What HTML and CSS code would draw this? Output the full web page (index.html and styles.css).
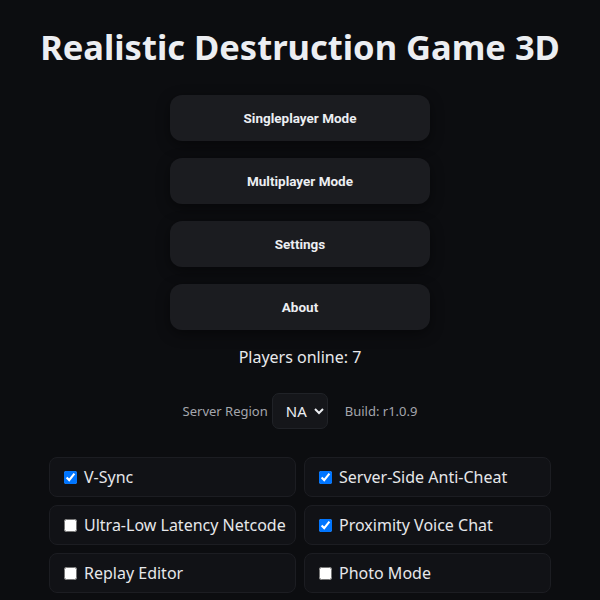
FILE: index.html
```html
<!DOCTYPE html>
<html lang="en">
<head>
    <meta charset="UTF-8">
    <meta name="viewport" content="width=device-width, initial-scale=1.0">
    <title>Realistic Destruction Game 3D</title>
    <link rel="stylesheet" href="styles.css">
</head>
<body>

<div class="menu">
    <h1>Realistic Destruction Game 3D</h1>

    <div class="menu-buttons">
        <button class="menu-button">Singleplayer Mode</button>
        <button class="menu-button">Multiplayer Mode</button>
        <button class="menu-button">Settings</button>
        <button class="menu-button">About</button>
    </div>

    <p class="players">Players online: 7</p>

    <div class="server-row">
        <label for="region">Server Region</label>
        <select id="region">
            <option value="na">NA</option>
            <option value="eu">EU</option>
            <option value="asia">ASIA</option>
        </select>
        <span class="build">Build: r1.0.9</span>
    </div>

    <!-- Feature toggles -->
    <div class="options">
        <label class="option"><input type="checkbox" checked> V-Sync</label>
        <label class="option"><input type="checkbox" checked> Server-Side Anti-Cheat</label>
        <label class="option"><input type="checkbox"> Ultra-Low Latency Netcode</label>
        <label class="option"><input type="checkbox" checked> Proximity Voice Chat</label>
        <label class="option"><input type="checkbox"> Replay Editor</label>
        <label class="option"><input type="checkbox"> Photo Mode</label>
    </div>
</div>

</body>
</html>
```

FILE: styles.css
```css
body {
    font-family: 'Noto Sans', sans-serif;
    background-color: #0c0d10;
    margin: 0;
    padding: 0;
    color: #e8e9ec;
    text-align: center;
}

.menu {
    max-width: 502px;
    margin: 0 auto;
    padding-top: 28px;
}

h1 {
    font-size: 34.5px;
    font-weight: bold;
    line-height: 38px;
    margin: 0 -50px 29px;
    color: #eceef2;
}

.menu-buttons {
    display: flex;
    flex-direction: column;
    align-items: center;
    gap: 17px;
}

.menu-button {
    width: 260px;
    height: 46px;
    font-family: 'Roboto', sans-serif;
    font-size: 13.5px;
    font-weight: bold;
    color: #eceef2;
    background-color: #1b1c20;
    border: none;
    border-radius: 12px;
    box-shadow: 0 4px 14px rgba(0, 0, 0, 0.45);
    cursor: pointer;
}

.menu-button:hover {
    background-color: #24262b;
}

.players {
    font-size: 16px;
    margin: 16px 0 0;
    line-height: 22px;
}

.server-row {
    display: flex;
    justify-content: center;
    align-items: center;
    margin-top: 25px;
    font-size: 13px;
    color: #a4a6ad;
}

.server-row select {
    margin-left: 4px;
    width: 56px;
    height: 36px;
    padding: 0 2px 0 9px;
    font-family: 'Noto Sans', sans-serif;
    font-size: 15px;
    color: #eceef2;
    background-color: #15161a;
    border: 1px solid #202227;
    border-radius: 7px;
}

.build {
    margin-left: 17px;
}

.options {
    display: grid;
    grid-template-columns: 1fr 1fr;
    gap: 8px;
    margin-top: 28px;
}

.option {
    display: flex;
    align-items: center;
    gap: 7px;
    height: 40px;
    box-sizing: border-box;
    padding: 0 6px 0 14px;
    font-size: 16px;
    white-space: nowrap;
    color: #e6e7ea;
    background-color: #111216;
    border: 1px solid #1c1d22;
    border-radius: 8px;
    text-align: left;
}

.option input {
    margin: 0;
    width: 13px;
    height: 13px;
}
```
